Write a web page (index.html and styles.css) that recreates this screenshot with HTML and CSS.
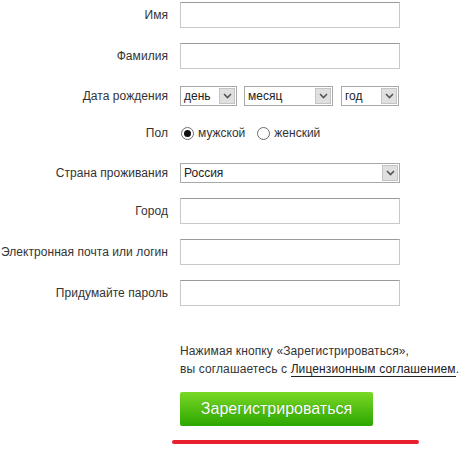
FILE: index.html
```
<!DOCTYPE html>
<html>

<head>
	<title>Регистрация</title>
	<link rel="stylesheet" href="styles.css">
</head>

<body>
	<form class="signup">
		<div class="row row-first">
			<label class="label">Имя</label>
			<input class="field" type="text">
		</div>
		<div class="row">
			<label class="label">Фамилия</label>
			<input class="field" type="text">
		</div>
		<div class="row row-date">
			<label class="label">Дата рождения</label>
			<div class="controls">
				<div class="select sel-day"><span class="value">день</span><span class="arrow"><svg width="9" height="6" viewBox="0 0 9 6"><path d="M1 1 L4.5 4.5 L8 1" fill="none" stroke="#555" stroke-width="1.6"/></svg></span></div>
				<div class="select sel-month"><span class="value">месяц</span><span class="arrow"><svg width="9" height="6" viewBox="0 0 9 6"><path d="M1 1 L4.5 4.5 L8 1" fill="none" stroke="#555" stroke-width="1.6"/></svg></span></div>
				<div class="select sel-year"><span class="value">год</span><span class="arrow"><svg width="9" height="6" viewBox="0 0 9 6"><path d="M1 1 L4.5 4.5 L8 1" fill="none" stroke="#555" stroke-width="1.6"/></svg></span></div>
			</div>
		</div>
		<div class="row row-sex">
			<label class="label">Пол</label>
			<div class="controls">
				<span class="radio checked"></span><span class="radio-text">мужской</span>
				<span class="radio"></span><span class="radio-text">женский</span>
			</div>
		</div>
		<div class="row row-country">
			<label class="label">Страна проживания</label>
			<div class="select sel-country"><span class="value">Россия</span><span class="arrow"><svg width="9" height="6" viewBox="0 0 9 6"><path d="M1 1 L4.5 4.5 L8 1" fill="none" stroke="#555" stroke-width="1.6"/></svg></span></div>
		</div>
		<div class="row">
			<label class="label">Город</label>
			<input class="field" type="text">
		</div>
		<div class="row">
			<label class="label">Электронная почта или логин</label>
			<input class="field" type="text">
		</div>
		<div class="row">
			<label class="label">Придумайте пароль</label>
			<input class="field" type="password">
		</div>

		<div class="bottom">
			<p class="terms">Нажимая кнопку «Зарегистрироваться»,<br>вы соглашаетесь с <a href="#">Лицензионным соглашением</a>.</p>
			<button type="button" class="submit">Зарегистрироваться</button>
			<div class="mark"></div>
		</div>
	</form>
</body>

</html>
```
FILE: styles.css
```
body {
	margin: 0;
	padding: 0;
	background-color: #fff;
	color: #333;
	font-family: "Liberation Sans", Arial, sans-serif;
	font-size: 12px;
}

.signup {
	padding-top: 2px;
}

.row {
	display: flex;
	align-items: center;
	height: 26px;
	margin-top: 15px;
}

.row-first {
	margin-top: 0;
}

.row-date {
	margin-top: 14px;
}

.row-sex {
	margin-top: 11px;
}

.row-country {
	margin-top: 14px;
}

.row-country + .row {
	margin-top: 12px;
}

.label {
	width: 168px;
	text-align: right;
	margin-right: 12px;
	white-space: nowrap;
	letter-spacing: 0.05px;
}

.controls {
	display: flex;
	align-items: center;
}

.field {
	box-sizing: border-box;
	width: 220px;
	height: 26px;
	margin: 0;
	border: 1px solid #c8c8c8;
	border-top-color: #9a9a9a;
	background: #fff;
	outline: none;
}

.select {
	box-sizing: border-box;
	display: flex;
	align-items: center;
	height: 20px;
	border: 1px solid #a9a9a9;
	background: #fff;
	color: #222;
	font-size: 12px;
}

.select .value {
	flex: 1;
	padding-left: 3px;
}

.select .arrow {
	box-sizing: border-box;
	display: flex;
	align-items: center;
	justify-content: center;
	width: 16px;
	height: 16px;
	margin-right: 1px;
	background: #e0e0e0;
	border: 1px solid #c4c4c4;
}

.sel-day {
	width: 57px;
	margin-right: 7px;
}

.sel-month {
	width: 89px;
	margin-right: 8px;
}

.sel-year {
	width: 58px;
}

.sel-country {
	width: 220px;
}

.radio {
	box-sizing: border-box;
	position: relative;
	width: 13px;
	height: 13px;
	border: 1px solid #6e6e6e;
	border-radius: 50%;
	background: #fff;
	margin-left: 1px;
	margin-right: 4px;
}

.radio.checked::after {
	content: "";
	position: absolute;
	left: 2px;
	top: 2px;
	width: 7px;
	height: 7px;
	border-radius: 50%;
	background: #111;
}

.radio-text {
	margin-right: 11px;
}

.bottom {
	padding-left: 180px;
	padding-top: 36px;
}

.terms {
	margin: 0;
	font-size: 12px;
	line-height: 18px;
	letter-spacing: 0.12px;
	color: #333;
	white-space: nowrap;
}

.terms a {
	color: #222;
	text-decoration: none;
	border-bottom: 1px solid #222;
}

.submit {
	display: block;
	width: 193px;
	height: 34px;
	margin-top: 14px;
	border: none;
	border-radius: 2px;
	background: linear-gradient(#7ad826, #2ca600);
	color: #fff;
	font-family: "Liberation Sans", Arial, sans-serif;
	font-size: 16px;
	text-shadow: 0 0 1px rgba(0, 80, 0, 0.4);
	cursor: pointer;
}

.mark {
	width: 247px;
	height: 4px;
	margin-top: 14px;
	margin-left: -8px;
	border-radius: 3px;
	background: #e8202b;
}
```
